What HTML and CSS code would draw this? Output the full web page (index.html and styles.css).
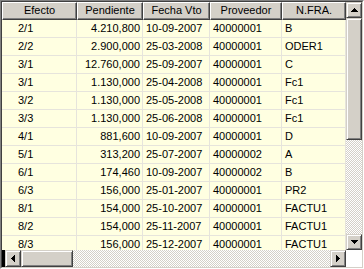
FILE: index.html
```html
<!DOCTYPE html>
<html>
<head>
<meta charset="utf-8">
<link rel="stylesheet" href="styles.css">
</head>
<body>
<div class="frame">
  <div class="inner">
    <div class="top">
      <div class="grid">
        <div class="row head">
          <div class="c c1 h">Efecto</div>
          <div class="c c2 h">Pendiente</div>
          <div class="c c3 h">Fecha Vto</div>
          <div class="c c4 h">Proveedor</div>
          <div class="c c5 h">N.FRA.</div>
        </div>
        <div class="row"><div class="c c1">2/1</div><div class="c c2">4.210,800</div><div class="c c3">10-09-2007</div><div class="c c4">40000001</div><div class="c c5">B</div></div>
        <div class="row"><div class="c c1">2/2</div><div class="c c2">2.900,000</div><div class="c c3">25-03-2008</div><div class="c c4">40000001</div><div class="c c5">ODER1</div></div>
        <div class="row"><div class="c c1">3/1</div><div class="c c2">12.760,000</div><div class="c c3">25-09-2007</div><div class="c c4">40000001</div><div class="c c5">C</div></div>
        <div class="row"><div class="c c1">3/1</div><div class="c c2">1.130,000</div><div class="c c3">25-04-2008</div><div class="c c4">40000001</div><div class="c c5">Fc1</div></div>
        <div class="row"><div class="c c1">3/2</div><div class="c c2">1.130,000</div><div class="c c3">25-05-2008</div><div class="c c4">40000001</div><div class="c c5">Fc1</div></div>
        <div class="row"><div class="c c1">3/3</div><div class="c c2">1.130,000</div><div class="c c3">25-06-2008</div><div class="c c4">40000001</div><div class="c c5">Fc1</div></div>
        <div class="row"><div class="c c1">4/1</div><div class="c c2">881,600</div><div class="c c3">10-09-2007</div><div class="c c4">40000001</div><div class="c c5">D</div></div>
        <div class="row"><div class="c c1">5/1</div><div class="c c2">313,200</div><div class="c c3">25-07-2007</div><div class="c c4">40000002</div><div class="c c5">A</div></div>
        <div class="row"><div class="c c1">6/1</div><div class="c c2">174,460</div><div class="c c3">10-09-2007</div><div class="c c4">40000002</div><div class="c c5">B</div></div>
        <div class="row"><div class="c c1">6/3</div><div class="c c2">156,000</div><div class="c c3">25-01-2007</div><div class="c c4">40000001</div><div class="c c5">PR2</div></div>
        <div class="row"><div class="c c1">8/1</div><div class="c c2">154,000</div><div class="c c3">25-10-2007</div><div class="c c4">40000001</div><div class="c c5">FACTU1</div></div>
        <div class="row"><div class="c c1">8/2</div><div class="c c2">154,000</div><div class="c c3">25-11-2007</div><div class="c c4">40000001</div><div class="c c5">FACTU1</div></div>
        <div class="row"><div class="c c1">8/3</div><div class="c c2">156,000</div><div class="c c3">25-12-2007</div><div class="c c4">40000001</div><div class="c c5">FACTU1</div></div>
      </div>
      <div class="vscroll">
        <div class="btn"><svg width="7" height="4" viewBox="0 0 7 4"><path d="M3 0h1v1h1v1h1v1h1v1H0V3h1V2h1V1h1z" fill="#000"/></svg></div>
        <div class="vthumb"></div>
        <div class="track"></div>
        <div class="btn"><svg width="7" height="4" viewBox="0 0 7 4"><path d="M0 0h7v1H6v1H5v1H4v1H3V3H2V2H1V1H0z" fill="#000"/></svg></div>
      </div>
    </div>
    <div class="hscroll">
      <div class="blk"></div>
      <div class="btn"><svg width="4" height="7" viewBox="0 0 4 7"><path d="M3 0h1v7H3V6H2V5H1V4H0V3h1V2h1V1h1z" fill="#000"/></svg></div>
      <div class="hthumb"></div>
      <div class="track"></div>
      <div class="btn"><svg width="4" height="7" viewBox="0 0 4 7"><path d="M0 0h1v1h1v1h1v1h1v1H3v1H2v1H1v1H0z" fill="#000"/></svg></div>
      <div class="corner"></div>
    </div>
  </div>
</div>
</body>
</html>
```
FILE: styles.css
```css
html, body {
  margin: 0;
  padding: 0;
  background: #d4d0c8;
}
.frame {
  width: 364px;
  height: 269px;
  box-sizing: border-box;
  border-style: solid;
  border-width: 1px;
  border-color: #808080 #ffffff #ffffff #808080;
  font-family: "Liberation Sans", Arial, sans-serif;
  font-size: 11px;
  color: #000;
}
.inner {
  height: 100%;
  box-sizing: border-box;
  border-style: solid;
  border-width: 1px;
  border-color: #404040 #d4d0c8 #d4d0c8 #404040;
  display: flex;
  flex-direction: column;
  overflow: hidden;
}
.top {
  display: flex;
  height: 248px;
  flex: none;
}
.grid {
  width: 344px;
  overflow: hidden;
  background: #ffffe1;
}
.row {
  display: flex;
  height: 18px;
}
.c {
  box-sizing: border-box;
  height: 18px;
  line-height: 17px;
  border-right: 1px solid #e6e4dc;
  border-bottom: 1px solid #e6e4dc;
  white-space: nowrap;
  overflow: hidden;
  padding: 0 3px;
}
.c1 { width: 75px; padding-left: 16px; }
.c2 { width: 66px; text-align: right; padding-right: 2px; }
.c3 { width: 67px; }
.c4 { width: 72px; }
.c5 { width: 64px; }
.head .h {
  background: #d4d0c8;
  text-align: center;
  padding: 0;
  border-style: solid;
  border-width: 1px;
  border-color: #ffffff #404040 #404040 #ffffff;
  box-shadow: inset -1px -1px 0 #808080;
  line-height: 15px;
}
.vscroll {
  width: 16px;
  display: flex;
  flex-direction: column;
}
.btn {
  width: 16px;
  height: 16px;
  flex: none;
  box-sizing: border-box;
  background: #d4d0c8;
  border-style: solid;
  border-width: 1px;
  border-color: #d4d0c8 #404040 #404040 #d4d0c8;
  box-shadow: inset 1px 1px 0 #ffffff, inset -1px -1px 0 #808080;
  display: flex;
  align-items: center;
  justify-content: center;
}
.vthumb {
  height: 122px;
  flex: none;
  box-sizing: border-box;
  background: #d4d0c8;
  border-style: solid;
  border-width: 1px;
  border-color: #d4d0c8 #404040 #404040 #d4d0c8;
  box-shadow: inset 1px 1px 0 #ffffff, inset -1px -1px 0 #808080;
}
.track {
  flex: 1;
  background: repeating-conic-gradient(#d4d0c8 0 25%, #ffffff 0 50%) 0 0 / 2px 2px;
}
.hscroll {
  display: flex;
  height: 17px;
  flex: none;
}
.hscroll .btn, .hscroll .corner, .hscroll .blk { height: 17px; }
.blk {
  width: 3px;
  background: #000;
  flex: none;
}
.hthumb {
  width: 52px;
  flex: none;
  box-sizing: border-box;
  background: #d4d0c8;
  border-style: solid;
  border-width: 1px;
  border-color: #d4d0c8 #404040 #404040 #d4d0c8;
  box-shadow: inset 1px 1px 0 #ffffff, inset -1px -1px 0 #808080;
}
.corner {
  width: 16px;
  flex: none;
  background: #ffffff;
}
```
